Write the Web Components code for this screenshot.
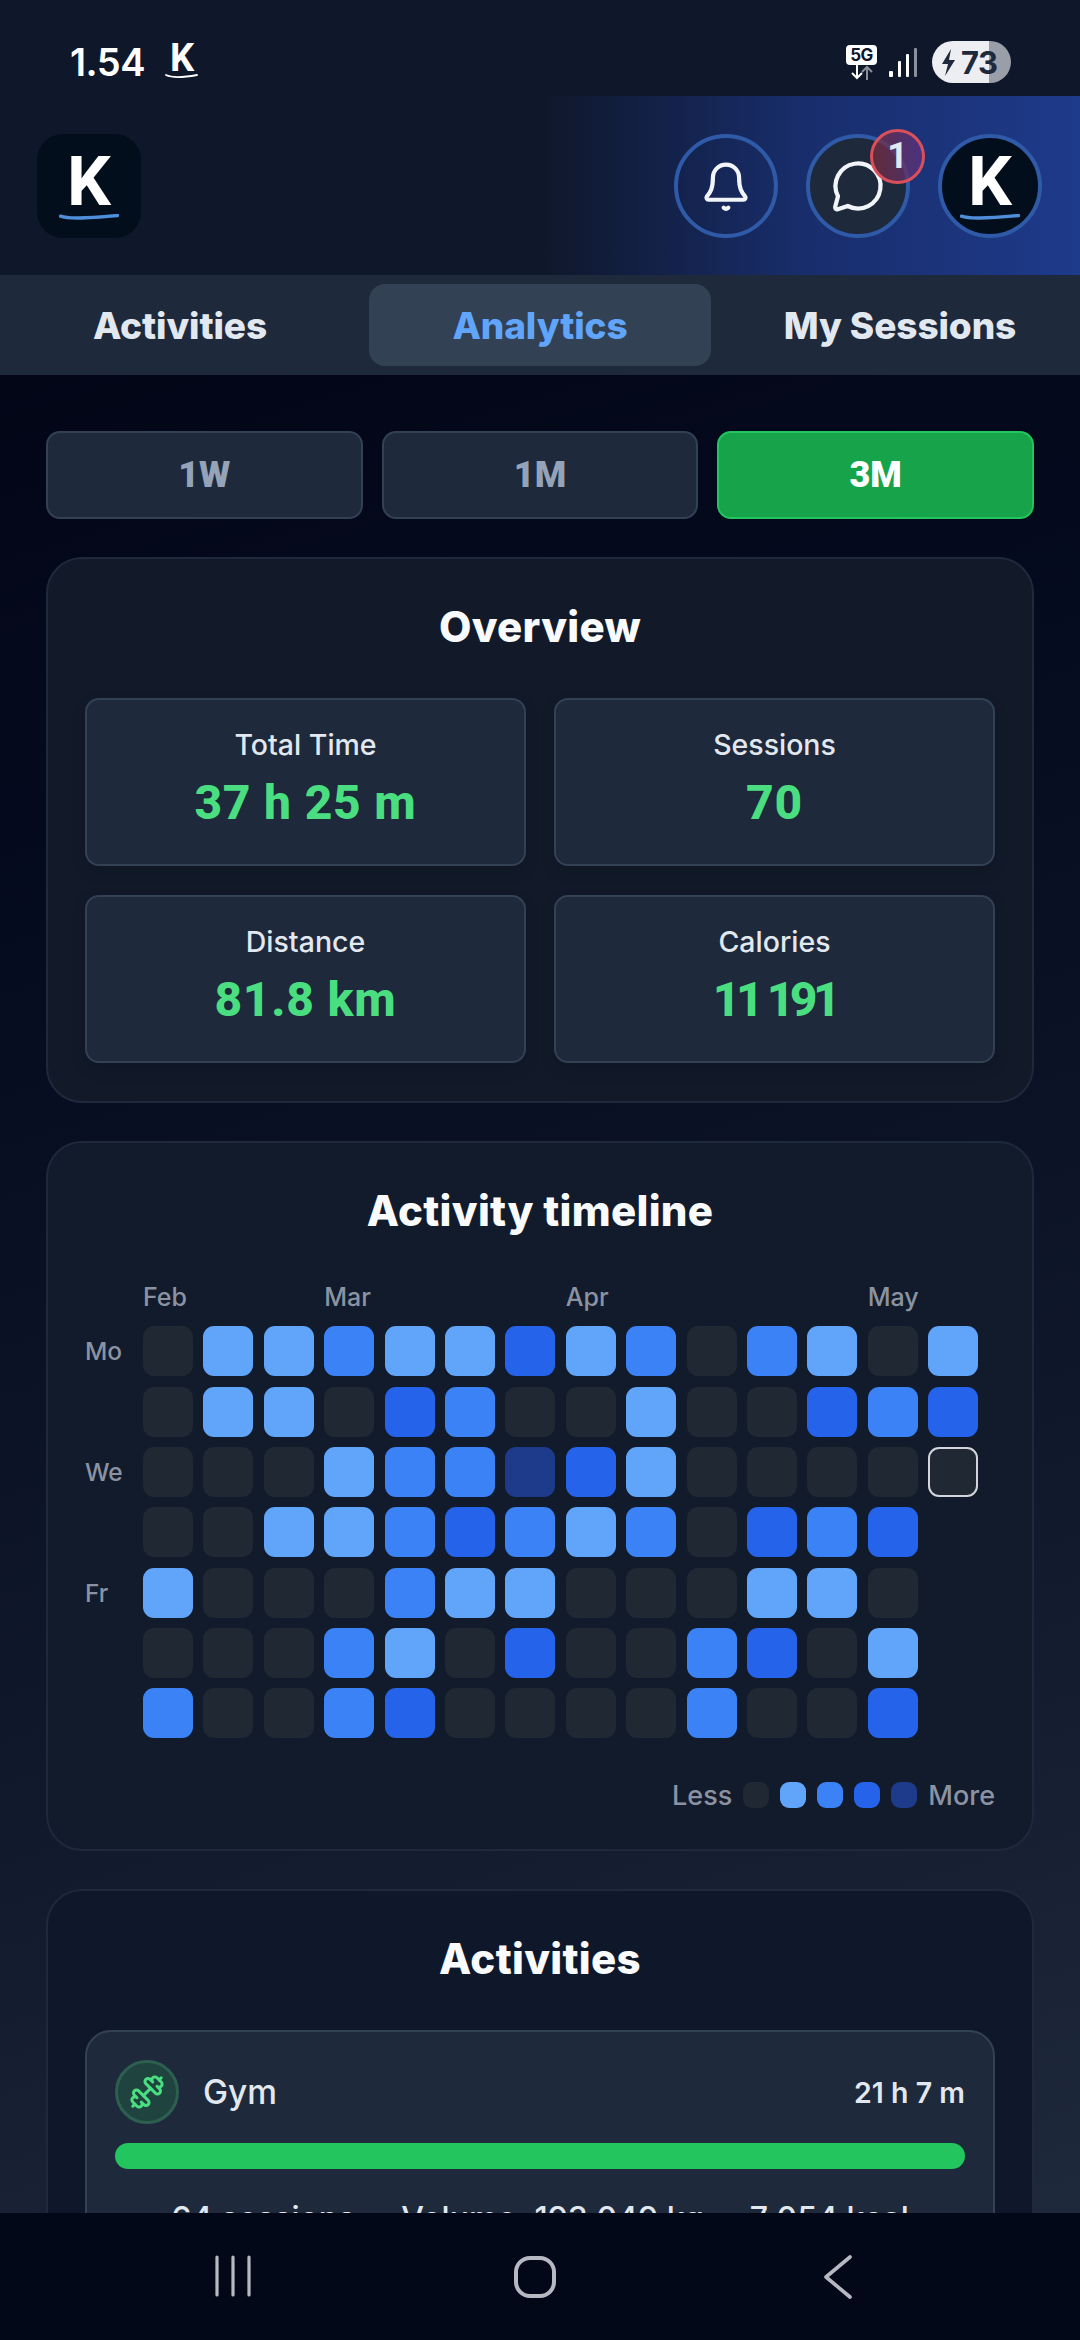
<!DOCTYPE html>
<html lang="en"><head><meta charset="utf-8"><title>Analytics</title>
<style>
html,body{margin:0;padding:0;background:#020617}
body{width:1080px;height:2340px;overflow:hidden;font-family:Inter,"Liberation Sans",sans-serif}
</style></head>
<body>
<x-app>
  <x-status slot="status"></x-status>
  <x-topbar slot="top"></x-topbar>
  <x-tabs slot="tabs"></x-tabs>
  <x-period></x-period>
  <x-card heading="Overview" tone="#121a2a">
    <div style="display:grid;grid-template-columns:1fr 1fr;gap:29px 28px">
      <x-stat label="Total Time" value="37 h 25 m"></x-stat>
      <x-stat label="Sessions" value="70"></x-stat>
      <x-stat label="Distance" value="81.8 km"></x-stat>
      <x-stat label="Calories" value="11 191" spacing="-4.500px"></x-stat>
    </div>
  </x-card>
  <x-card heading="Activity timeline" tone="#121b2b"><x-heatmap></x-heatmap></x-card>
  <x-card heading="Activities" tone="#0f182a">
    <x-activity name="Gym" time="21 h 7 m" sessions="64 sessions" volume="Volume: 193 049 kg" kcal="7 054 kcal"></x-activity>
  </x-card>
  <x-nav slot="nav"></x-nav>
</x-app>
<script>
function def(name, render){
  customElements.define(name, class extends HTMLElement{
    connectedCallback(){
      if(this.shadowRoot) return;
      this.attachShadow({mode:'open'}).innerHTML = render(this);
    }
  });
}
const HEAD='Inter,"Liberation Sans",sans-serif';
const NUM='Roboto,"Liberation Sans",sans-serif';
const BODY='Inter,"Liberation Sans",sans-serif';

def('x-app',()=>`<style>
:host{display:flex;flex-direction:column;width:1080px;height:2340px;overflow:hidden}
main{flex:1;min-height:0;overflow:hidden;box-sizing:border-box;padding:56px 46px 0;display:flex;flex-direction:column;gap:38px;
background:linear-gradient(163deg,#020617 0%,#050b1e 25%,#0f172a 62%,#1e293b 100%)}
</style><slot name="status"></slot><slot name="top"></slot><slot name="tabs"></slot><main><slot></slot></main><slot name="nav"></slot>`);

def('x-status',()=>`<style>
:host{display:flex;align-items:center;justify-content:space-between;height:96px;box-sizing:border-box;padding:28px 69px 0 70px;background:#0f172a;color:#fff;font-family:${BODY}}
.l{display:flex;align-items:center;gap:25px}
.t{font-size:38px;font-weight:600;line-height:40px;letter-spacing:-.5px}
.k{position:relative;font:700 38px/36px ${NUM};margin-top:-8px}
.k svg{position:absolute;left:-5px;top:33px}
.r{display:flex;align-items:center}
.g{display:flex;flex-direction:column;align-items:center;width:31px;margin-right:12px}
.g b{display:block;width:31px;height:20px;background:#fff;border-radius:4px;color:#0f172a;font-size:17px;line-height:20px;text-align:center;font-weight:700;letter-spacing:-.5px}
.sig{margin-right:15px;display:block}
.bat{width:79px;height:42px;border-radius:21px;background:linear-gradient(90deg,#eceef2 72%,#9a9ea8 72%);display:flex;align-items:center;padding-left:9px;box-sizing:border-box;gap:2px;color:#1e293b;font-size:31px;font-weight:700;letter-spacing:-.5px}
</style>
<div class="l"><span class="t">1.54</span><span class="k">K<svg width="34" height="6" viewBox="0 0 34 6"><path d="M1 2c6 3 20 2 31 0" fill="none" stroke="#fff" stroke-width="1.8" stroke-linecap="round"/></svg></span></div>
<div class="r">
 <div class="g"><b>5G</b><svg width="26" height="15" viewBox="0 0 26 15" style="display:block"><path d="M8 0v13M3 8l5 5 5-5" fill="none" stroke="#fff" stroke-width="2"/><path d="M18 15V2M13 7l5-5 5 5" fill="none" stroke="#8a8f99" stroke-width="2"/></svg></div>
 <svg class="sig" width="28" height="29" viewBox="0 0 28 29"><rect x="0" y="23" width="4" height="6" rx="1" fill="#fff"/><rect x="9" y="13" width="3" height="16" rx="1" fill="#fff"/><rect x="17" y="6" width="3" height="23" rx="1" fill="#fff"/><rect x="25" y="0" width="3" height="29" rx="1" fill="#8a8f99"/></svg>
 <div class="bat"><svg width="18" height="27" viewBox="0 0 18 27"><path d="M10 0 1 15h6l-3 12 10-16H8z" fill="#1e293b"/></svg><span>73</span></div>
</div>`);

const kLogo=(w,h)=>`<svg width="${w}" height="${h}" viewBox="0 0 60 6" style="display:block"><path d="M1.5 2.2C9 5 24 4.500 58.500 1.500" fill="none" stroke="#4f8fd9" stroke-width="3.400" stroke-linecap="round"/></svg>`;
def('x-topbar',()=>`<style>
:host{display:flex;align-items:center;justify-content:space-between;height:179px;box-sizing:border-box;padding:0 38px 0 37px;
background:linear-gradient(90deg,#0f172a 50%,#182d6b 74%,#1e3a8a 100%);font-family:${NUM}}
.logo,.c{width:104px;height:104px;box-sizing:border-box;display:flex;flex-direction:column;align-items:center;justify-content:center}
.logo{border-radius:26px;background:#020e1c;color:#fff}
.K{font-size:69px;font-weight:700;line-height:60px;height:60px;margin-top:0}
.logo svg,.c>svg:not(.i){margin-top:2px}
.r{display:flex;gap:28px}
.c{position:relative;border-radius:50%;border:4px solid #2f5aa8;color:#fff}
.chat{background:#1e293b}
.av{background:#020e1c}
.badge{position:absolute;top:-9px;right:-19px;width:55px;height:55px;box-sizing:border-box;border-radius:50%;border:3px solid #d9505a;background:linear-gradient(90deg,rgba(120,45,60,.75),rgba(90,50,130,.75));color:#e2e8f0;font:700 36px/48px ${NUM};text-align:center}
</style>
<div class="logo"><span class="K">K</span>${kLogo(60,6)}</div>
<div class="r">
 <div class="c"><svg class="i" width="56" height="56" viewBox="0 0 24 24" fill="none" stroke="#f1f5f9" stroke-width="1.800" stroke-linecap="round" stroke-linejoin="round"><path d="M12 2.800a5.600 5.600 0 0 0-5.600 5.600c0 4.600-1.100 6.300-2.500 7.900-.6.700-.2 1.600.7 1.600h14.800c.9 0 1.300-.9.700-1.600-1.400-1.600-2.500-3.300-2.500-7.900A5.600 5.600 0 0 0 12 2.800Z"/><path d="M11 21.300q1 .9 2 0"/></svg></div>
 <div class="c chat"><svg class="i" width="60" height="60" viewBox="0 0 24 24" fill="none" stroke="#f1f5f9" stroke-width="1.700" stroke-linecap="round" stroke-linejoin="round"><path d="M7.900 20A9 9 0 1 0 4 16.100L2.900 20.200c-.2.900.2 1.300 1 1.100Z"/></svg><span class="badge">1</span></div>
 <div class="c av"><span class="K">K</span>${kLogo(60,6)}</div>
</div>`);

def('x-tabs',()=>`<style>
:host{display:grid;grid-template-columns:repeat(3,342px);gap:18px;height:100px;box-sizing:border-box;padding:9px;background:#1e293b;font-family:${HEAD}}
div{display:flex;align-items:center;justify-content:center;border-radius:16px;font-size:37px;font-weight:800;color:#e2e8f0;letter-spacing:-.1px}
.a{background:#334155;color:#60a5fa}
</style><div>Activities</div><div class="a">Analytics</div><div>My Sessions</div>`);

def('x-period',()=>`<style>
:host{display:grid;grid-template-columns:repeat(3,1fr);gap:19px;font-family:${NUM}}
div{height:88px;box-sizing:border-box;display:flex;align-items:center;justify-content:center;border:2px solid #334155;border-radius:14px;background:#1e293b;color:#94a3b8;font-size:36px;font-weight:900}
.a{background:#16a34a;border-color:#22c55e;color:#fff}
</style><div>1W</div><div>1M</div><div class="a">3M</div>`);

def('x-card',h=>`<style>
:host{display:block;flex:none;box-sizing:border-box;border:2px solid #1e293b;border-radius:36px;background:${h.getAttribute('tone')};padding:38px 37px 38px}
h2{margin:0 0 41px;height:60px;text-align:center;font:800 42px/60px ${HEAD};color:#f8fafc;letter-spacing:.3px}
</style><h2>${h.getAttribute('heading')}</h2><slot></slot>`);

def('x-stat',h=>`<style>
:host{display:flex;flex-direction:column;align-items:center;height:168px;box-sizing:border-box;border:2px solid #334155;border-radius:14px;background:#1e293b;box-shadow:0 6px 14px rgba(0,0,0,.18);padding-top:25px}
.l{font:500 28.500px/40px ${BODY};color:#e2e8f0}
.v{font:800 48px/56px ${NUM};color:#4ade80;margin-top:10px;letter-spacing:${h.getAttribute('spacing')||'.8px'}}
</style><div class="l">${h.getAttribute('label')}</div><div class="v">${h.getAttribute('value')}</div>`);

const HEAT=[
 [0,1,1,2,1,1,3,1,2,0,2,1,0,1],
 [0,1,1,0,3,2,0,0,1,0,0,3,2,3],
 [0,0,0,1,2,2,4,3,1,0,0,0,0,5],
 [0,0,1,1,2,3,2,1,2,0,3,2,3],
 [1,0,0,0,2,1,1,0,0,0,1,1,0],
 [0,0,0,2,1,0,3,0,0,2,3,0,1],
 [2,0,0,2,3,0,0,0,0,2,0,0,3]];
def('x-heatmap',()=>{
 let cells='';
 [['Feb',0],['Mar',3],['Apr',7],['May',12]].forEach(([m,c])=>{cells+=`<span class="m" style="grid-column:${c+2};grid-row:1">${m}</span>`;});
 [['Mo',0],['We',2],['Fr',4]].forEach(([d,r])=>{cells+=`<span class="d" style="grid-column:1;grid-row:${r+2}">${d}</span>`;});
 HEAT.forEach((row,r)=>row.forEach((v,c)=>{cells+=`<i class="v${v}" style="grid-column:${c+2};grid-row:${r+2}"></i>`;}));
 return `<style>
:host{display:block;font-family:${BODY};color:#8b93a3;margin-top:2.500px}
.g{display:grid;grid-template-columns:47.600px repeat(14,50px);grid-template-rows:34px repeat(7,50px);column-gap:10.400px;row-gap:10.330px}
.m{font-size:25px;line-height:30px;white-space:nowrap;font-weight:500}
.d{font-size:24.500px;align-self:center;font-weight:500;line-height:30px}
i{display:block;border-radius:11px;box-sizing:border-box}
.v0,.s0{background:#1f2833}.v1,.s1{background:#60a5fa}.v2,.s2{background:#3b82f6}.v3,.s3{background:#2563eb}.v4,.s4{background:#1e3a8a}
.v5{background:#1f2833;border:2px solid #d1d5db}
.lg{display:flex;justify-content:flex-end;align-items:center;gap:11px;margin-top:44px;height:26px;font-size:27px;font-weight:500;margin-bottom:3px}
.lg i{width:26px;height:26px;border-radius:9px}
</style><div class="g">${cells}</div>
<div class="lg"><span>Less</span><i class="s0"></i><i class="s1"></i><i class="s2"></i><i class="s3"></i><i class="s4"></i><span>More</span></div>`;
});

def('x-activity',h=>`<style>
:host{display:block;box-sizing:border-box;border:2px solid #334155;border-radius:26px;background:#1e293b;padding:28px 28px 40px;font-family:${BODY}}
.top{display:flex;align-items:center;gap:24px;height:64px}
.ic{width:64px;height:64px;box-sizing:border-box;border-radius:50%;border:3px solid #2d5f50;background:#1f4440;display:flex;align-items:center;justify-content:center}
.n{flex:1;font-size:33.500px;font-weight:500;color:#e2e8f0}
.t{font-size:28.500px;font-weight:600;color:#e2e8f0}
.bar{height:26px;border-radius:13px;background:#22c55e;margin-top:19px}
.s{display:flex;justify-content:center;gap:46px;margin-top:30px;font-size:32px;font-weight:500;color:#e2e8f0;white-space:nowrap}
</style>
<div class="top"><div class="ic"><svg width="36" height="36" viewBox="0 0 24 24" fill="none" stroke="#4ade80" stroke-width="2" stroke-linecap="round" stroke-linejoin="round" style="transform:scaleX(-1)"><path d="M14.400 14.400 9.600 9.600"/><path d="M18.657 21.485a2 2 0 1 1-2.829-2.828l-1.767 1.768a2 2 0 1 1-2.829-2.829l6.364-6.364a2 2 0 1 1 2.829 2.829l-1.768 1.767a2 2 0 1 1 2.828 2.829z"/><path d="m21.500 21.500-1.400-1.400"/><path d="M3.900 3.900 2.500 2.500"/><path d="M6.404 12.768a2 2 0 1 1-2.829-2.829l1.768-1.767a2 2 0 1 1-2.828-2.829l2.828-2.828a2 2 0 1 1 2.829 2.828l1.767-1.768a2 2 0 1 1 2.829 2.829z"/></svg></div>
<span class="n">${h.getAttribute('name')}</span><span class="t">${h.getAttribute('time')}</span></div>
<div class="bar"></div>
<div class="s"><span>${h.getAttribute('sessions')}</span><span>${h.getAttribute('volume')}</span><span>${h.getAttribute('kcal')}</span></div>`);

def('x-nav',()=>`<style>
:host{display:flex;flex:none;height:127px;box-sizing:border-box;background:#020817;align-items:flex-start;justify-content:center;padding:42px 10px 0 0}
.b{width:302.500px;display:flex;justify-content:center}
</style>
<div class="b"><svg width="38" height="42" viewBox="0 0 38 42" fill="none" stroke="#b6b9c2" stroke-width="3.200" stroke-linecap="round"><path d="M3 2v38M19 2v38M35 2v38"/></svg></div>
<div class="b"><svg width="44" height="44" viewBox="0 0 44 44" fill="none" stroke="#b6b9c2" stroke-width="4"><rect x="3" y="3" width="38" height="38" rx="14"/></svg></div>
<div class="b"><svg width="30" height="44" viewBox="0 0 30 44" fill="none" stroke="#b6b9c2" stroke-width="3.600" stroke-linecap="round" stroke-linejoin="round"><path d="M27 2 3 22l24 20"/></svg></div>`);
</script>
</body></html>
